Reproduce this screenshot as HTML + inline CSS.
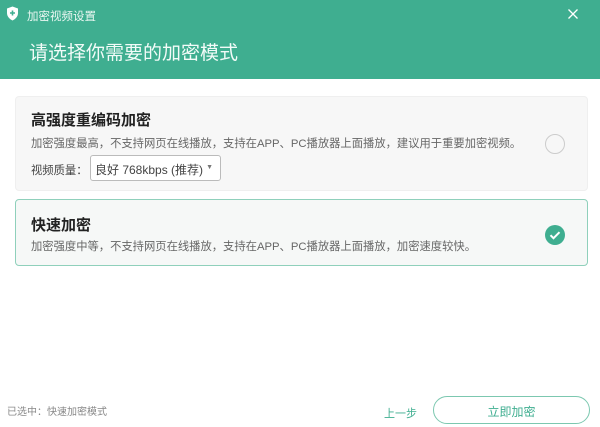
<!DOCTYPE html>
<html><head><meta charset="utf-8"><style>
*{margin:0;padding:0;box-sizing:border-box}
body{width:600px;height:427px;background:#fff;font-family:"Liberation Sans","Microsoft YaHei","Noto Sans CJK SC",sans-serif;position:relative;overflow:hidden;color:#333}
.hdr{position:absolute;left:0;top:0;width:600px;height:79px;background:#3fae90}
.t1{position:absolute;left:27px;top:8px;font-size:11.5px;color:#eaf7f2}
.t2{position:absolute;left:29px;top:38px;font-size:19px;color:#f2fbf8}
.card{position:absolute;left:15px;width:573px;border-radius:4px}
.c1{top:96px;height:95px;background:#f7f7f7;border:1px solid #efefef}
.c2{top:199px;height:67px;background:#f6f8f7;border:1px solid #8fd0bb}
.h{position:absolute;left:15px;font-size:15px;font-weight:bold;color:#222}
.d{position:absolute;left:15px;font-size:11.3px;color:#666;white-space:nowrap}
.sel{position:absolute;left:74px;top:58px;width:131px;height:26px;border:1px solid #bbb;border-radius:3px;background:#fff;font-size:12px;color:#444;padding:5px 0 0 4px}
.rad{position:absolute;left:529px;width:20px;height:20px;border-radius:50%}
</style></head><body>
<div class="hdr">
<svg style="position:absolute;left:6px;top:6px" width="13" height="15" viewBox="0 0 13 15"><path d="M6.5 0.5 L12 2.5 V7 C12 10.5 9.5 13 6.5 14.5 C3.5 13 1 10.5 1 7 V2.5Z" fill="#fff"/><path d="M6.5 4.5v5M4 7h5" stroke="#3fae90" stroke-width="1.6"/></svg>
<div class="t1">加密视频设置</div>
<svg style="position:absolute;left:568px;top:9px" width="10" height="10"><path d="M0.5 0.5L9.5 9.5M9.5 0.5L0.5 9.5" stroke="#fff" stroke-width="1.3"/></svg>
<div class="t2">请选择你需要的加密模式</div>
</div>
<div class="card c1">
<div class="h" style="top:12px">高强度重编码加密</div>
<div class="d" style="top:38px">加密强度最高，不支持网页在线播放，支持在APP、PC播放器上面播放，建议用于重要加密视频。</div>
<div class="d" style="top:65px;color:#444">视频质量：</div>
<div class="sel">良好 768kbps (推荐)<span style="position:absolute;right:7px;top:8px;font-size:7px;color:#777">▼</span></div>
<div class="rad" style="top:37px;border:1.5px solid #ccc"></div>
</div>
<div class="card c2">
<div class="h" style="top:14px">快速加密</div>
<div class="d" style="top:38px">加密强度中等，不支持网页在线播放，支持在APP、PC播放器上面播放，加密速度较快。</div>
<div class="rad" style="top:25px;background:#3fae90"><svg width="20" height="20"><path d="M5.5 10.2l3 3 6-6" stroke="#fff" stroke-width="2" fill="none"/></svg></div>
</div>
<div style="position:absolute;left:7px;top:403px;font-size:10px;color:#888">已选中：快速加密模式</div>
<div style="position:absolute;left:384px;top:405px;font-size:11px;color:#3fae90">上一步</div>
<div style="position:absolute;left:433px;top:396px;width:157px;height:28px;border:1.5px solid #7cc8b0;border-radius:14px;text-align:center;font-size:12px;color:#3fae90;padding-top:6px">立即加密</div>
</body></html>
